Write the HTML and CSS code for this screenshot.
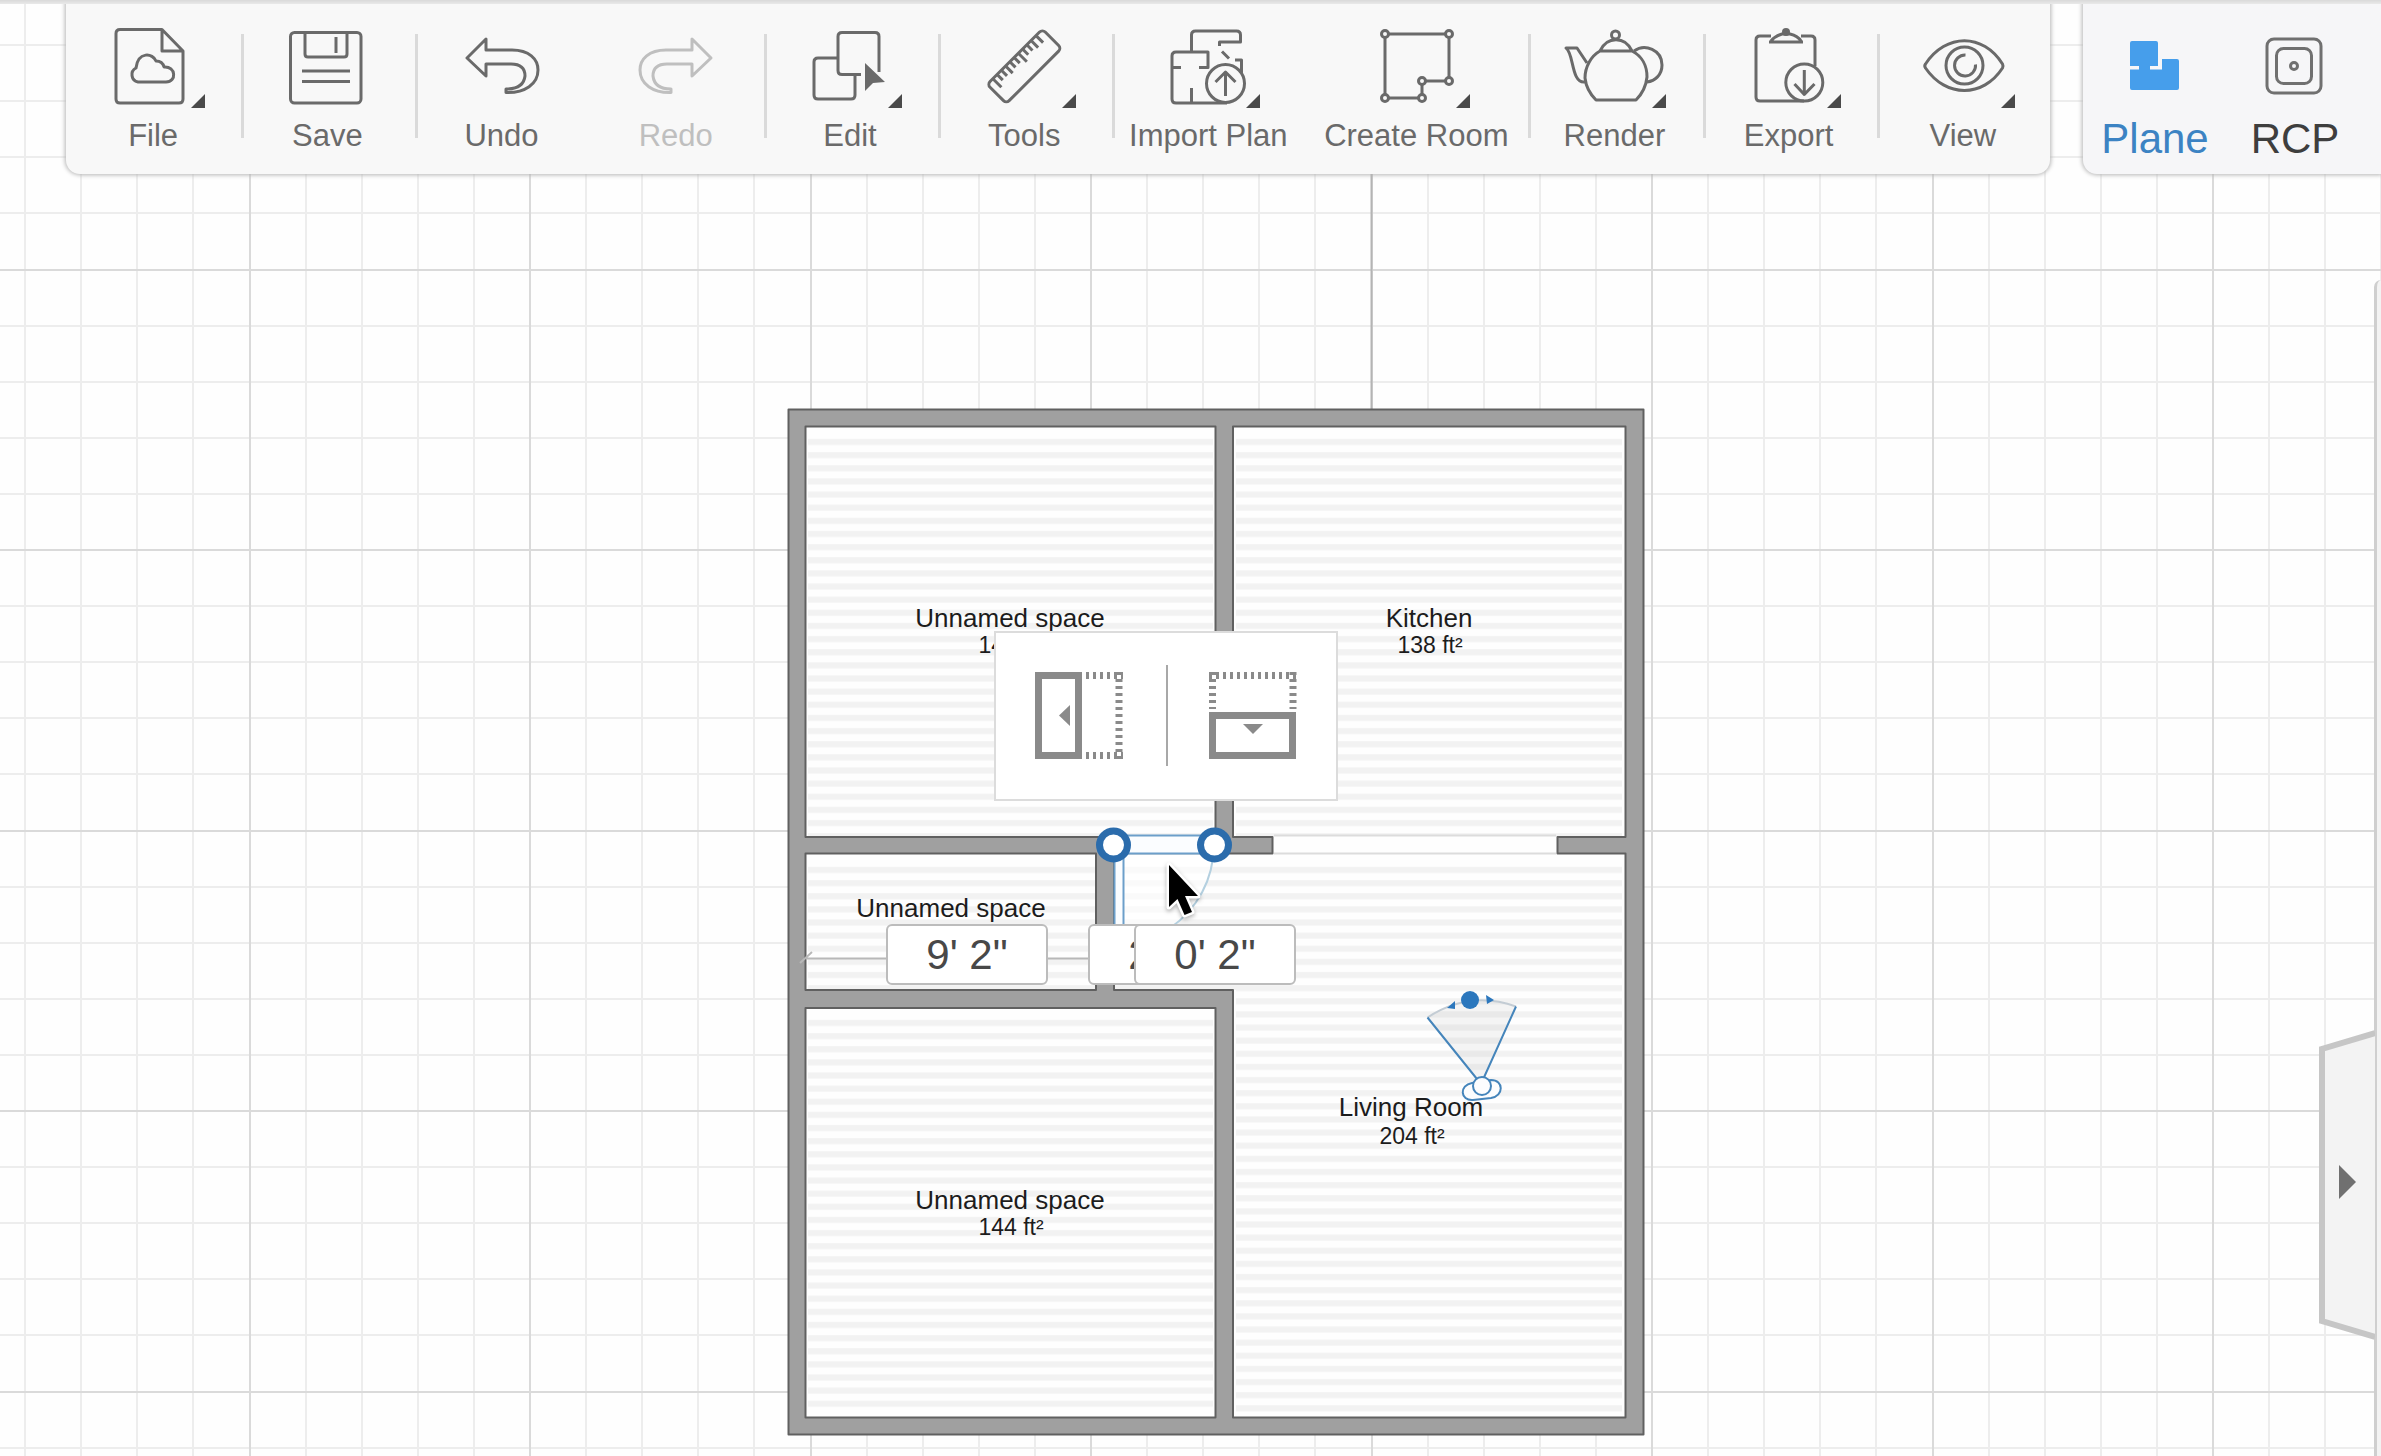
FILE: index.html
```html
<!DOCTYPE html>
<html lang="en">
<head>
<meta charset="utf-8">
<meta name="viewport" content="width=device-width, initial-scale=1">
<title>Floor Planner</title>
<link rel="stylesheet" href="styles.css">
</head>
<body>
<header class="topbar">
  <nav class="toolbar" aria-label="Main tools">
    <button class="tool" type="button">
      <svg class="tool-icon" viewBox="-60 20 120 92" aria-hidden="true">
        <path d="M-33 29.500H9L30 51V99q0 4-4 4H-33q-4 0-4-4V33.500q0-4 4-4ZM9 30V51H30"/>
        <path d="M-15 82A7.500 7.500 0 0 1-17 68C-15 51 0 53 3 61C7 61 10 63 11 67C23 66 24 82 13 82Z"/>
        <path class="more" d="M52 94V108H38Z"/>
      </svg>
      <span>File</span>
    </button>
    <button class="tool divided" type="button">
      <svg class="tool-icon" viewBox="-60 20 120 92" aria-hidden="true">
        <rect x="-36.500" y="32.500" width="70.500" height="70.500" rx="4"/>
        <path d="M-22 33V54q0 3 3 3H17q3 0 3-3V33M9 37V53M-25 71H23M-25 81.500H23"/>
      </svg>
      <span>Save</span>
    </button>
    <button class="tool divided" type="button">
      <svg class="tool-icon" viewBox="-60 20 120 92" aria-hidden="true">
        <path d="M-35 58L-16 39V50H10C27 50 36 59 36 70C36 84 23 93 4 92.500V89C16 89 22 85 23 76C23 68 18 64 9 64H-16V76Z"/>
      </svg>
      <span>Undo</span>
    </button>
    <button class="tool" type="button" disabled>
      <svg class="tool-icon" viewBox="-60 20 120 92" aria-hidden="true">
        <path d="M35 58L16 39V50H-10C-27 50-36 59-36 70C-36 84-23 93-5 92.500V89C-16 89-22 85-23 76C-23 68-18 64-9 64H16V76Z"/>
      </svg>
      <span>Redo</span>
    </button>
    <button class="tool divided" type="button">
      <svg class="tool-icon" viewBox="-60 20 120 92" aria-hidden="true">
        <path d="M-13 58H-32q-4 0-4 4V95q0 4 4 4H1q4 0 4-4V76"/>
        <path d="M11 74.500H-8q-4 0-4-4V36.500q0-4 4-4H25q4 0 4 4V72"/>
        <path class="solid" d="M15 63V91L23 83L35 82Z"/>
        <path class="more" d="M52 94V108H38Z"/>
      </svg>
      <span>Edit</span>
    </button>
    <button class="tool divided" type="button">
      <svg class="tool-icon" viewBox="-60 20 120 92" aria-hidden="true">
        <g transform="translate(0 66) rotate(-45)">
          <rect x="-39" y="-13" width="78" height="27" rx="4"/>
          <path d="M-31-13V-1M-25-13V-5M-19-13V-5M-13-13V-3M-7-13V-5M-1-13V-5M5-13V-1M11-13V-5M17-13V-5M23-13V-3M30-13V-3"/>
        </g>
        <path class="more" d="M52 94V108H38Z"/>
      </svg>
      <span>Tools</span>
    </button>
    <button class="tool divided" type="button">
      <svg class="tool-icon" viewBox="-59 20 120 92" aria-hidden="true">
        <path d="M-8 67.500H1V52H-31q-4 0-4 4V99q0 4 4 4H20M-35 67.500H-26M-15.500 88V102M-15.500 52V35q0-4 4-4H29.500q4 0 4 4V42H12.500V46M15 51.500L22 58.500M28 60H34.500V73"/>
        <circle cx="18.500" cy="83.500" r="19"/>
        <path d="M18.500 96V72M8.500 82L18.500 72L28.500 82"/>
        <path class="more" d="M53 94V108H39Z"/>
      </svg>
      <span>Import Plan</span>
    </button>
    <button class="tool" type="button">
      <svg class="tool-icon" viewBox="-60 20 120 92" aria-hidden="true">
        <path d="M-31 34H33V81H6V98H-31Z"/>
        <g class="nodes"><circle cx="-31" cy="34" r="3.500"/><circle cx="33" cy="34" r="3.500"/><circle cx="33" cy="81" r="3.500"/><circle cx="6" cy="81" r="3.500"/><circle cx="6" cy="98" r="3.500"/><circle cx="-31" cy="98" r="3.500"/></g>
        <path class="more" d="M54 94V108H40Z"/>
      </svg>
      <span>Create Room</span>
    </button>
    <button class="tool divided" type="button">
      <svg class="tool-icon" viewBox="-60 20 120 92" aria-hidden="true">
        <path d="M-14 51C-23 56-29 67-29 78C-28 87-24 94-18 100H22C28 94 32 87 33 77C33 66 28 56 18 51ZM-14 51C-7 36 11 36 18 51"/>
        <circle cx="1.500" cy="35" r="4"/>
        <path d="M-27 63L-37 48H-48C-40 53-43 84-29 82M20 51C31 43 48 50 48 65C48 75 41 81 33 82"/>
        <path class="more" d="M52 94V108H38Z"/>
      </svg>
      <span>Render</span>
    </button>
    <button class="tool divided" type="button">
      <svg class="tool-icon" viewBox="-60 20 120 92" aria-hidden="true">
        <path d="M-18 36H-29q-4 0-4 4V97q0 4 4 4H15M12 36H22q4 0 4 4V66M-20 42H14M-18 41C-14 36-10 35-7 34H1C5 35 9 36 12 41"/>
        <circle class="solid" cx="-3" cy="32" r="4"/>
        <circle cx="15.300" cy="82.500" r="18.500"/>
        <path d="M15.300 70V94M5.500 84L15.300 94.500L25.500 84"/>
        <path class="more" d="M52 94V108H38Z"/>
      </svg>
      <span>Export</span>
    </button>
    <button class="tool divided" type="button">
      <svg class="tool-icon" viewBox="-60 20 120 92" aria-hidden="true">
        <path d="M-37.500 64C-17 33 20 33 39.500 64Q40.500 66 39.500 68C20 98-17 98-37.500 68Q-39 66-37.500 64Z"/>
        <circle cx="1.500" cy="65.500" r="18.500"/>
        <path d="M2.500 55A10.500 10.500 0 1 0 12.500 64.500"/>
        <path class="more" d="M52 94V108H38Z"/>
      </svg>
      <span>View</span>
    </button>
  </nav>

  <nav class="viewbar" aria-label="Plan view">
    <button class="mode mode-active" type="button" aria-pressed="true">
      <svg class="mode-icon" viewBox="0 0 60 60" aria-hidden="true">
        <path class="plane" d="M5 6q0-2 2-2H31q2 0 2 2V29H25V32.500H37V22H52q2 0 2 2V51q0 2-2 2H7q-2 0-2-2V32.500H14V29H5Z"/>
      </svg>
      <span>Plane</span>
    </button>
    <button class="mode" type="button" aria-pressed="false">
      <svg class="mode-icon" viewBox="0 0 60 60" aria-hidden="true">
        <rect x="2" y="2" width="54" height="54" rx="7"/>
        <rect x="11.500" y="11.500" width="35" height="35" rx="7"/>
        <circle cx="29" cy="29" r="3.500"/>
      </svg>
      <span>RCP</span>
    </button>
  </nav>
</header>

<main class="canvas">
  <svg class="plan" role="img" aria-label="Floor plan">
    <defs>
      <pattern id="grid" x="249" y="269" width="561" height="561" patternUnits="userSpaceOnUse">
        <path class="grid-minor" d="M57 0V561M113 0V561M169 0V561M225 0V561M337 0V561M393 0V561M449 0V561M505 0V561M0 57H561M0 113H561M0 169H561M0 225H561M0 337H561M0 393H561M0 449H561M0 505H561"/>
        <path class="grid-major" d="M1 0V561M281 0V561M0 1H561M0 281H561"/>
      </pattern>
      <pattern id="floor-top" x="0" y="436" width="40" height="13.140" patternUnits="userSpaceOnUse">
        <rect class="board" y="3" width="40" height="6"/>
      </pattern>
      <pattern id="floor-middle" x="0" y="864" width="40" height="13.130" patternUnits="userSpaceOnUse">
        <rect class="board" y="3" width="40" height="6"/>
      </pattern>
      <pattern id="floor-bottom" x="0" y="1017" width="40" height="13.130" patternUnits="userSpaceOnUse">
        <rect class="board" y="3" width="40" height="6"/>
      </pattern>
    </defs>

    <rect width="100%" height="100%" fill="url(#grid)"/>
    <path class="axis" d="M1371.500 0V409"/>

    <rect class="ground" x="788" y="409" width="856" height="1025"/>
    <path fill="url(#floor-top)" d="M808 433H1213V836H808ZM1236 433H1622V836H1236Z"/>
    <path fill="url(#floor-middle)" d="M808 863H1622V1413H1236V990H808Z"/>
    <path fill="url(#floor-bottom)" d="M808 1014H1213V1413H808Z"/>

    <path class="wall" fill-rule="evenodd" d="M788.500 409.500H1643.500V1434.500H788.500Z
      M805.500 426.500H1215.500V837H805.500Z
      M1233 426.500H1625.500V837H1557.500V853.500H1625.500V1417.500H1233V990H1114V853.500H1272.500V837H1233Z
      M805.500 853.500H1096V990H805.500Z
      M805.500 1008H1215.500V1417.500H805.500Z"/>
    <rect class="ground" x="1274" y="835" width="282" height="19"/>
    <path class="opening" d="M1274 835.500H1556M1274 853.500H1556"/>

    <path class="dimension" d="M806 958.500H1096M800 963L812 952"/>

    <g class="door">
      <path class="swing" d="M1114 854H1213A100 100 0 0 1 1114 945Z"/>
      <path class="arc" d="M1213 858A100 100 0 0 1 1160 934"/>
      <rect class="leaf" x="1114.500" y="853" width="9" height="90"/>
      <rect class="leaf" x="1113" y="835.500" width="101" height="18"/>
      <circle class="handle" cx="1113.500" cy="845" r="14"/>
      <circle class="handle" cx="1214.500" cy="845" r="14"/>
    </g>

    <g class="camera">
      <path class="cone" d="M1481 1084L1427.500 1017.500Q1470 990 1516 1006.500Z"/>
      <path class="cone-arc" d="M1427.500 1017.500Q1470 990 1516 1006.500"/>
      <path class="edge" d="M1427.500 1017.500L1481 1084L1516 1006.500"/>
      <path class="body" d="M1472 1083C1459 1085 1460 1101 1473 1100L1491 1098C1504 1096 1504 1080 1491 1080Z"/>
      <circle class="body" cx="1482" cy="1086" r="9"/>
      <circle class="dot" cx="1470" cy="1000" r="9"/>
      <path class="dot" d="M1447 1008L1455 1001V1009ZM1486 995L1494 1000L1487 1004Z"/>
    </g>

    <g class="room-label">
      <text class="name" x="1010" y="627">Unnamed space</text>
      <text class="area" x="1011" y="653">144 ft²</text>
      <text class="name" x="1429" y="627">Kitchen</text>
      <text class="area" x="1430" y="653">138 ft²</text>
      <text class="name" x="951" y="917">Unnamed space</text>
      <text class="name" x="1411" y="1116">Living Room</text>
      <text class="area" x="1412" y="1144">204 ft²</text>
      <text class="name" x="1010" y="1209">Unnamed space</text>
      <text class="area" x="1011" y="1235">144 ft²</text>
    </g>
  </svg>

  <div class="flip-menu" role="group" aria-label="Flip door">
    <button class="flip" type="button" aria-label="Flip horizontally">
      <svg viewBox="0 0 88 88" aria-hidden="true">
        <rect class="frame" x="3.500" y="3.500" width="40" height="80"/>
        <path class="dots" d="M51 3.500H88M51 83.500H88M84 0V88"/>
        <path class="arrow" d="M35 33V54L24 43.500Z"/>
      </svg>
    </button>
    <button class="flip" type="button" aria-label="Flip vertically">
      <svg viewBox="0 0 88 88" aria-hidden="true">
        <rect class="frame" x="3.500" y="43.500" width="80" height="40"/>
        <path class="dots" d="M0 3.500H88M3.500 0V37M84 0V37"/>
        <path class="arrow" d="M34 52H54L44 62Z"/>
      </svg>
    </button>
  </div>

  <input class="measure measure-left" type="text" value="9' 2&quot;" aria-label="Distance to left wall">
  <input class="measure measure-width" type="text" value="2' 6&quot;" aria-label="Door width">
  <input class="measure measure-right" type="text" value="0' 2&quot;" aria-label="Distance to right wall">

  <svg class="pointer" viewBox="0 0 40 60" aria-hidden="true">
    <path d="M5 5V47L13.500 39L20.500 55L28 52L21 36H34Z"/>
  </svg>

  <aside class="drawer" aria-label="Properties">
    <button class="drawer-tab" type="button" aria-label="Open properties">
      <svg viewBox="0 0 60 312" aria-hidden="true">
        <path class="tab-shape" d="M60 3L7 19V291L60 307"/>
        <path class="tab-arrow" d="M24 135V169L41 152Z"/>
      </svg>
    </button>
  </aside>
</main>
</body>
</html>
```
FILE: styles.css
```css
* {
  box-sizing: border-box;
}

body {
  margin: 0;
  min-height: 100vh;
  overflow: hidden;
  background: #fefefe;
  font-family: "Liberation Sans", Arial, sans-serif;
}

button {
  padding: 0;
  border: 0;
  background: none;
  color: inherit;
  font: inherit;
}

svg {
  display: block;
  fill: none;
}

/* Top bar */

.topbar {
  position: relative;
  z-index: 2;
  display: grid;
  grid-template-columns: 66fr 1984fr 33fr 298fr;
}

.topbar::before {
  content: "";
  position: absolute;
  inset: 0 0 auto;
  height: 4px;
  background: linear-gradient(#d9d9d9, #e9e9e9);
  z-index: 1;
}

.toolbar,
.viewbar {
  height: 174px;
  border-radius: 0 0 14px 14px;
  box-shadow: 0 0 4px 1px #b4b4b4;
}

.toolbar {
  grid-column: 2;
  display: grid;
  grid-template-columns: repeat(6, 1fr) 194px 222px repeat(3, 1fr);
  background: #f8f8f8;
  color: #6a6a6a;
}

.viewbar {
  grid-column: 4;
  display: flex;
  padding-left: 2px;
  border-radius: 0 0 0 14px;
  background: #f6f6f8;
  color: #3e3e3e;
}

.tool {
  display: flex;
  flex-direction: column;
  align-items: center;
  gap: 6px;
  padding-top: 20px;
  font-size: 31px;
  line-height: 36px;
  white-space: nowrap;
}

.tool:disabled {
  color: #bfbfbf;
}

.divided {
  background: linear-gradient(#dadada, #dadada) 1px 34px / 3px 104px no-repeat;
}

.tool-icon {
  width: 120px;
  height: 92px;
  stroke: currentColor;
  stroke-width: 3;
  stroke-linejoin: round;
}

.tool-icon .solid {
  fill: #6a6a6a;
  stroke: none;
}

.tool-icon .more {
  fill: #4a4a4a;
  stroke: none;
}

.nodes {
  fill: #f8f8f8;
}

.mode {
  display: flex;
  flex-direction: column;
  align-items: center;
  gap: 18px;
  width: 140px;
  padding-top: 37px;
  font-size: 42px;
  line-height: 48px;
}

.mode-active {
  color: #3c83c3;
}

.mode-icon {
  width: 60px;
  height: 60px;
  stroke: #707070;
  stroke-width: 3;
}

.mode-icon .plane {
  fill: #469eeb;
  stroke: none;
}

/* Drawing area */

.canvas {
  position: absolute;
  inset: 0;
  overflow: hidden;
}

.plan {
  width: 100%;
  height: 100%;
}

.grid-minor {
  stroke: #ededed;
  stroke-width: 2;
}

.grid-major {
  stroke: #dadada;
  stroke-width: 2;
}

.axis {
  stroke: #b4b4b4;
  stroke-width: 2;
}

.ground {
  fill: #fefefe;
}

.board {
  fill: #f2f2f2;
}

.wall {
  fill: #a0a0a0;
  stroke: #606060;
  stroke-width: 2;
  stroke-linejoin: round;
}

.opening {
  stroke: #dcdcdc;
  stroke-width: 2;
}

.dimension {
  stroke: #b8b8b8;
  stroke-width: 2;
}

.swing {
  fill: #fff;
  fill-opacity: 0.6;
}

.arc {
  stroke: #b4d0e0;
  stroke-width: 2;
}

.leaf {
  fill: #fbfdff;
  stroke: #6c9fca;
  stroke-width: 2;
}

.handle {
  fill: #fff;
  stroke: #2b6cac;
  stroke-width: 7;
}

.cone {
  fill: #808080;
  fill-opacity: 0.08;
}

.cone-arc {
  stroke: #c3ccd4;
  stroke-width: 2;
}

.edge,
.body {
  stroke: #4585bb;
  stroke-width: 2;
}

.body {
  fill: #fcfdfe;
}

.dot {
  fill: #2b77bd;
}

.room-label {
  fill: #1c1c1c;
  text-anchor: middle;
}

.name {
  font-size: 26px;
}

.area {
  font-size: 23px;
}

/* Overlays on the plan */

.flip-menu {
  position: absolute;
  left: 994px;
  top: 631px;
  display: flex;
  width: 344px;
  height: 170px;
  border: 2px solid #dcdcdc;
  background: #fff;
}

.flip {
  display: flex;
  flex: 1;
  align-items: center;
  justify-content: center;
  padding-right: 4px;
}

.flip + .flip {
  padding: 0 0 0 4px;
  background: linear-gradient(#a8a8a8, #a8a8a8) 0 32px / 2px 101px no-repeat;
}

.flip svg {
  width: 88px;
  height: 88px;
}

.frame {
  stroke: #8a8a8a;
  stroke-width: 7;
}

.dots {
  stroke: #8a8a8a;
  stroke-width: 7;
  stroke-dasharray: 3 4;
}

.arrow {
  fill: #8a8a8a;
}

.measure {
  position: absolute;
  top: 924px;
  width: 162px;
  height: 61px;
  padding: 0;
  border: 2px solid #bcbcbc;
  border-radius: 6px;
  background: #fff;
  color: #484848;
  font: 42px/48px "Liberation Sans", Arial, sans-serif;
  text-align: center;
}

.measure-left {
  left: 886px;
}

.measure-width {
  left: 1088px;
}

.measure-right {
  left: 1134px;
}

.pointer {
  position: absolute;
  left: 1164px;
  top: 860px;
  width: 40px;
  height: 60px;
  fill: #000;
  stroke: #fff;
  stroke-width: 5;
  stroke-linejoin: round;
  paint-order: stroke;
  filter: drop-shadow(0 2px 2px rgb(0 0 0 / 0.3));
}

.drawer {
  position: absolute;
  top: 280px;
  right: 0;
  bottom: 0;
  width: 7px;
  border-left: 3px solid #cfcfcf;
  border-top-left-radius: 7px;
  background: #f3f3f3;
}

.drawer-tab {
  position: absolute;
  top: 750px;
  right: 6px;
  width: 60px;
  height: 312px;
}

.tab-shape {
  fill: #f3f3f3;
  stroke: #c6c6c6;
  stroke-width: 6;
}

.tab-arrow {
  fill: #707070;
}
```
